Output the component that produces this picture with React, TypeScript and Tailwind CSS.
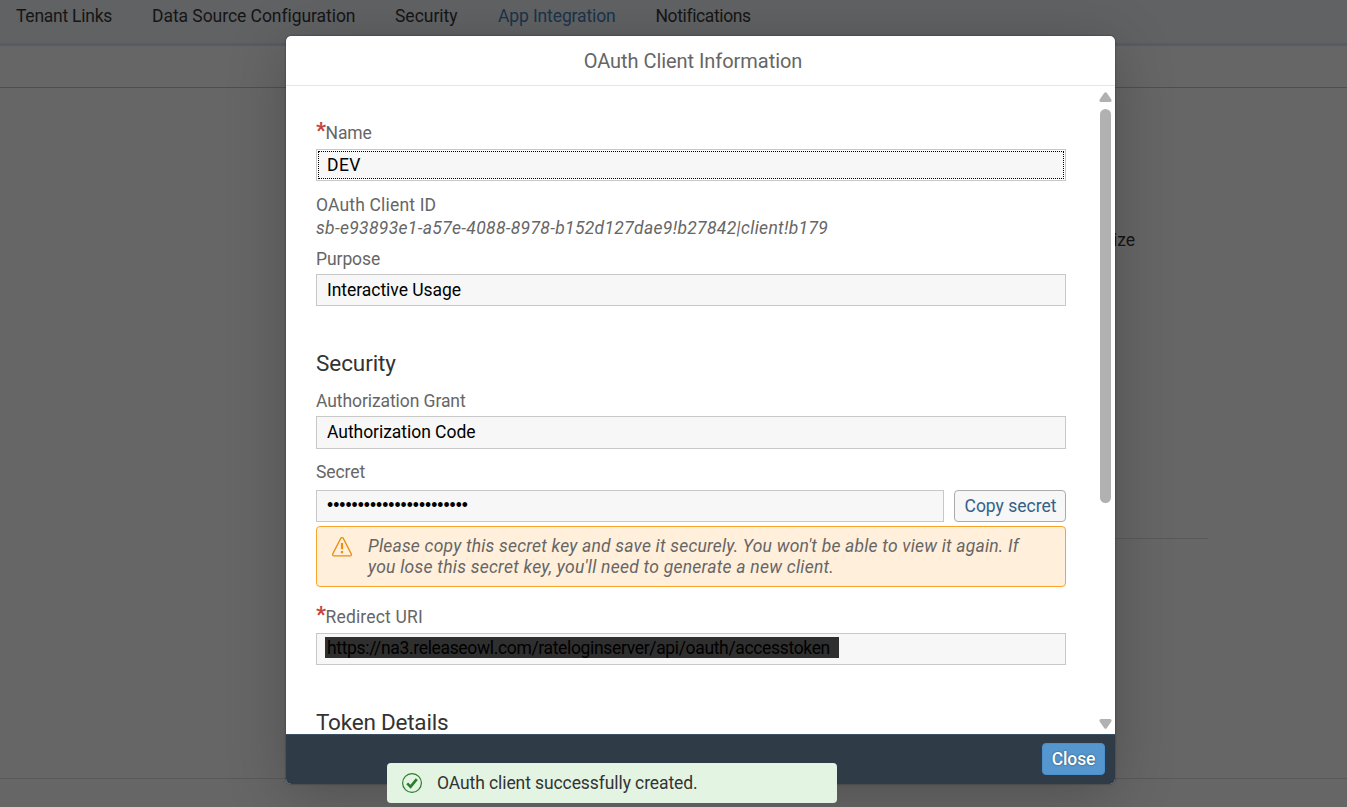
import React from "react";

const label = "flex h-5 items-start whitespace-nowrap text-[17.5px] leading-5 text-[#666]";
const input =
  "flex items-center whitespace-nowrap border border-[#c8c8c8] bg-[#f7f7f7] pl-[10px] text-[17.5px] leading-5 text-black";

function Star() {
  return <span className="-mt-0.5 w-[9.5px] text-[22px] leading-5 font-bold text-[#c14646]">*</span>;
}

function Background() {
  return (
    <div className="flex h-full flex-col bg-[#666]">
      <nav className="flex h-[43px] items-start whitespace-nowrap bg-[#606264] pt-1.5 pl-4 text-[17.5px] leading-5 text-[#151515]">
        <span className="w-[136px] tracking-[-0.25px]">Tenant Links</span>
        <span className="w-[243px] tracking-[-0.05px]">Data Source Configuration</span>
        <span className="w-[103px] tracking-[-0.02px]">Security</span>
        <span className="w-[157.5px] tracking-[-0.12px] text-[#1b334a]">App Integration</span>
        <span className="tracking-[-0.38px]">Notifications</span>
      </nav>
      <div className="h-[3px] bg-[#565c64]" />
      <div className="h-[42px] border-b border-[#4f4f4f]" />
      <div className="flex h-[450px] items-start justify-end pt-[142px] pr-[212px] text-[17.5px] leading-5 text-[#151515]">
        ize
      </div>
      <div className="ml-[700px] h-px w-[508px] bg-[#595959]" />
      <div className="h-[239px]" />
      <div className="h-px bg-[#595959]" />
    </div>
  );
}

function Scrollbar() {
  return (
    <div className="flex w-[13px] flex-col items-center pt-1.5 pb-[5px]">
      <svg width="13" height="10" viewBox="0 0 13 10" fill="#b1b1b1">
        <path d="M5.3.8Q6.5-.5 7.7.8L12.2 7.2Q13.3 9.8 11 10H2Q-.3 9.8.8 7.2Z" />
      </svg>
      <div className="mt-[7px] h-[394px] w-[11px] rounded-full bg-[#b1b1b1]" />
      <svg className="mt-auto" width="13" height="10" viewBox="0 0 13 10" fill="#b1b1b1">
        <path d="M5.3 9.2Q6.5 10.5 7.7 9.2L12.2 2.8Q13.3.2 11 0H2Q-.3.2.8 2.8Z" />
      </svg>
    </div>
  );
}

function Dialog() {
  return (
    <div className="flex h-[748px] w-[829px] flex-col overflow-hidden rounded-[5px] bg-white shadow-[0_0_2px_rgba(0,0,0,0.5),0_10px_60px_rgba(0,0,0,0.22)]">
      <header className="h-[50px] border-b border-[#e5e5e5] pt-[13px] text-center text-[20px] leading-6 tracking-[-0.05px] text-[#666]">
        <span className="pr-[15px]">OAuth Client Information</span>
      </header>
      <div className="flex min-h-0 flex-1 justify-between pr-[3px] pl-[30px]">
        <div className="w-[750px] pt-[37px]">
          <div className={`${label} tracking-[-0.1px]`}>
            <Star />
            <span>Name</span>
          </div>
          <div className="mt-1.5 h-8 border border-[#c8c8c8] p-px">
            <div className="flex h-7 items-center border border-dotted border-black bg-[#f7f7f7] pl-2 text-[17.5px] leading-5 tracking-[0.4px] text-black">
              DEV
            </div>
          </div>
          <div className={`${label} mt-3.5 tracking-[0.17px]`}>OAuth Client ID</div>
          <div className={`${label} mt-[3px] tracking-[0.32px] italic`}>
            sb-e93893e1-a57e-4088-8978-b152d127dae9!b27842|client!b179
          </div>
          <div className={`${label} mt-[11px] tracking-[-0.08px]`}>Purpose</div>
          <div className={`${input} mt-[5px] h-8 tracking-[-0.04px]`}>Interactive Usage</div>

          <h2 className="mt-[43px] text-[22.5px] leading-7 tracking-[-0.08px] text-[#333]">Security</h2>
          <div className={`${label} mt-3.5 tracking-[-0.08px]`}>Authorization Grant</div>
          <div className={`${input} mt-[5px] h-[33px] pb-px tracking-[-0.04px]`}>Authorization Code</div>
          <div className={`${label} mt-[13px] tracking-[-0.08px]`}>Secret</div>
          <div className="mt-2 flex gap-2.5">
            <div className={`${input} h-8 w-[628px] pb-0.5 font-['Liberation_Sans',sans-serif]`}>
              •••••••••••••••••••••••
            </div>
            <button className="h-8 flex-1 rounded-[4px] border border-[#ababab] bg-[#f7f7f7] pl-px text-[17.5px] leading-5 whitespace-nowrap text-[#346187]">
              Copy secret
            </button>
          </div>
          <div className="mt-1 flex h-[61px] rounded-[4px] border border-[#f9a429] bg-[#ffefdb] pt-[9px] pl-[15px] text-[17.5px] leading-[21px] text-[#666] italic">
            <svg className="mt-px" width="20" height="20" viewBox="0 0 20 20" fill="none" stroke="#e9900e">
              <path d="M8.7 1.4Q10-.3 11.3 1.4L19.1 16.6Q19.9 18.7 18 18.9H2Q.1 18.7.9 16.6Z" strokeWidth="1.3" />
              <path d="M10 6v6.3M10 14v2.2" strokeWidth="2.2" />
            </svg>
            <p className="pl-4 whitespace-nowrap">
              <span className="block tracking-[0.205px]">
                Please copy this secret key and save it securely. You won't be able to view it again. If
              </span>
              <span className="block tracking-[0.25px]">
                you lose this secret key, you'll need to generate a new client.
              </span>
            </p>
          </div>
          <div className={`${label} mt-5 tracking-[0.17px]`}>
            <Star />
            <span>Redirect URI</span>
          </div>
          <div className="mt-1.5 h-8 border border-[#c8c8c8] bg-[#f7f7f7] pt-[3px] pl-2">
            <div className="h-[21px] w-[514px] bg-[#2f2f2f] pl-0.5 text-[17.5px] leading-[23px] whitespace-nowrap tracking-[-0.34px] text-black">
              https://na3.releaseowl.com/rateloginserver/api/oauth/accesstoken
            </div>
          </div>
          <h2 className="mt-[43px] text-[22.5px] leading-7 tracking-[-0.22px] text-[#333]">Token Details</h2>
        </div>
        <Scrollbar />
      </div>
      <footer className="flex h-[50px] shrink-0 items-start justify-end border-t border-[#3c5064] bg-[#2f3c48] pt-2 pr-2.5">
        <button className="h-8 w-[63px] rounded-[4px] border border-[#4a8fce] bg-[#5496cd] text-[17.5px] leading-5 font-medium tracking-[-0.15px] text-white [text-shadow:0_0_2px_rgba(0,0,0,0.5)]">
          Close
        </button>
      </footer>
    </div>
  );
}

export default function App() {
  return (
    <div className="relative h-[807px] w-[1347px] overflow-hidden font-[Roboto,sans-serif]">
      <Background />
      <div className="absolute top-9 left-[286px]">
        <Dialog />
      </div>
      <div className="absolute top-[763px] left-[387px] flex h-10 w-[450px] items-center rounded-[4px] bg-[#e4f4e3] pl-[15px] text-[17.5px] leading-5 tracking-[-0.09px] text-[#333]">
        <svg width="20" height="20" viewBox="0 0 20 20" fill="none" stroke="#2b7d2b">
          <circle cx="10" cy="10" r="9.4" strokeWidth="1.2" />
          <path d="M5.2 10.3 8.6 13.7 14.8 6.2" strokeWidth="2.6" />
        </svg>
        <span className="pl-[15px]">OAuth client successfully created.</span>
      </div>
    </div>
  );
}
